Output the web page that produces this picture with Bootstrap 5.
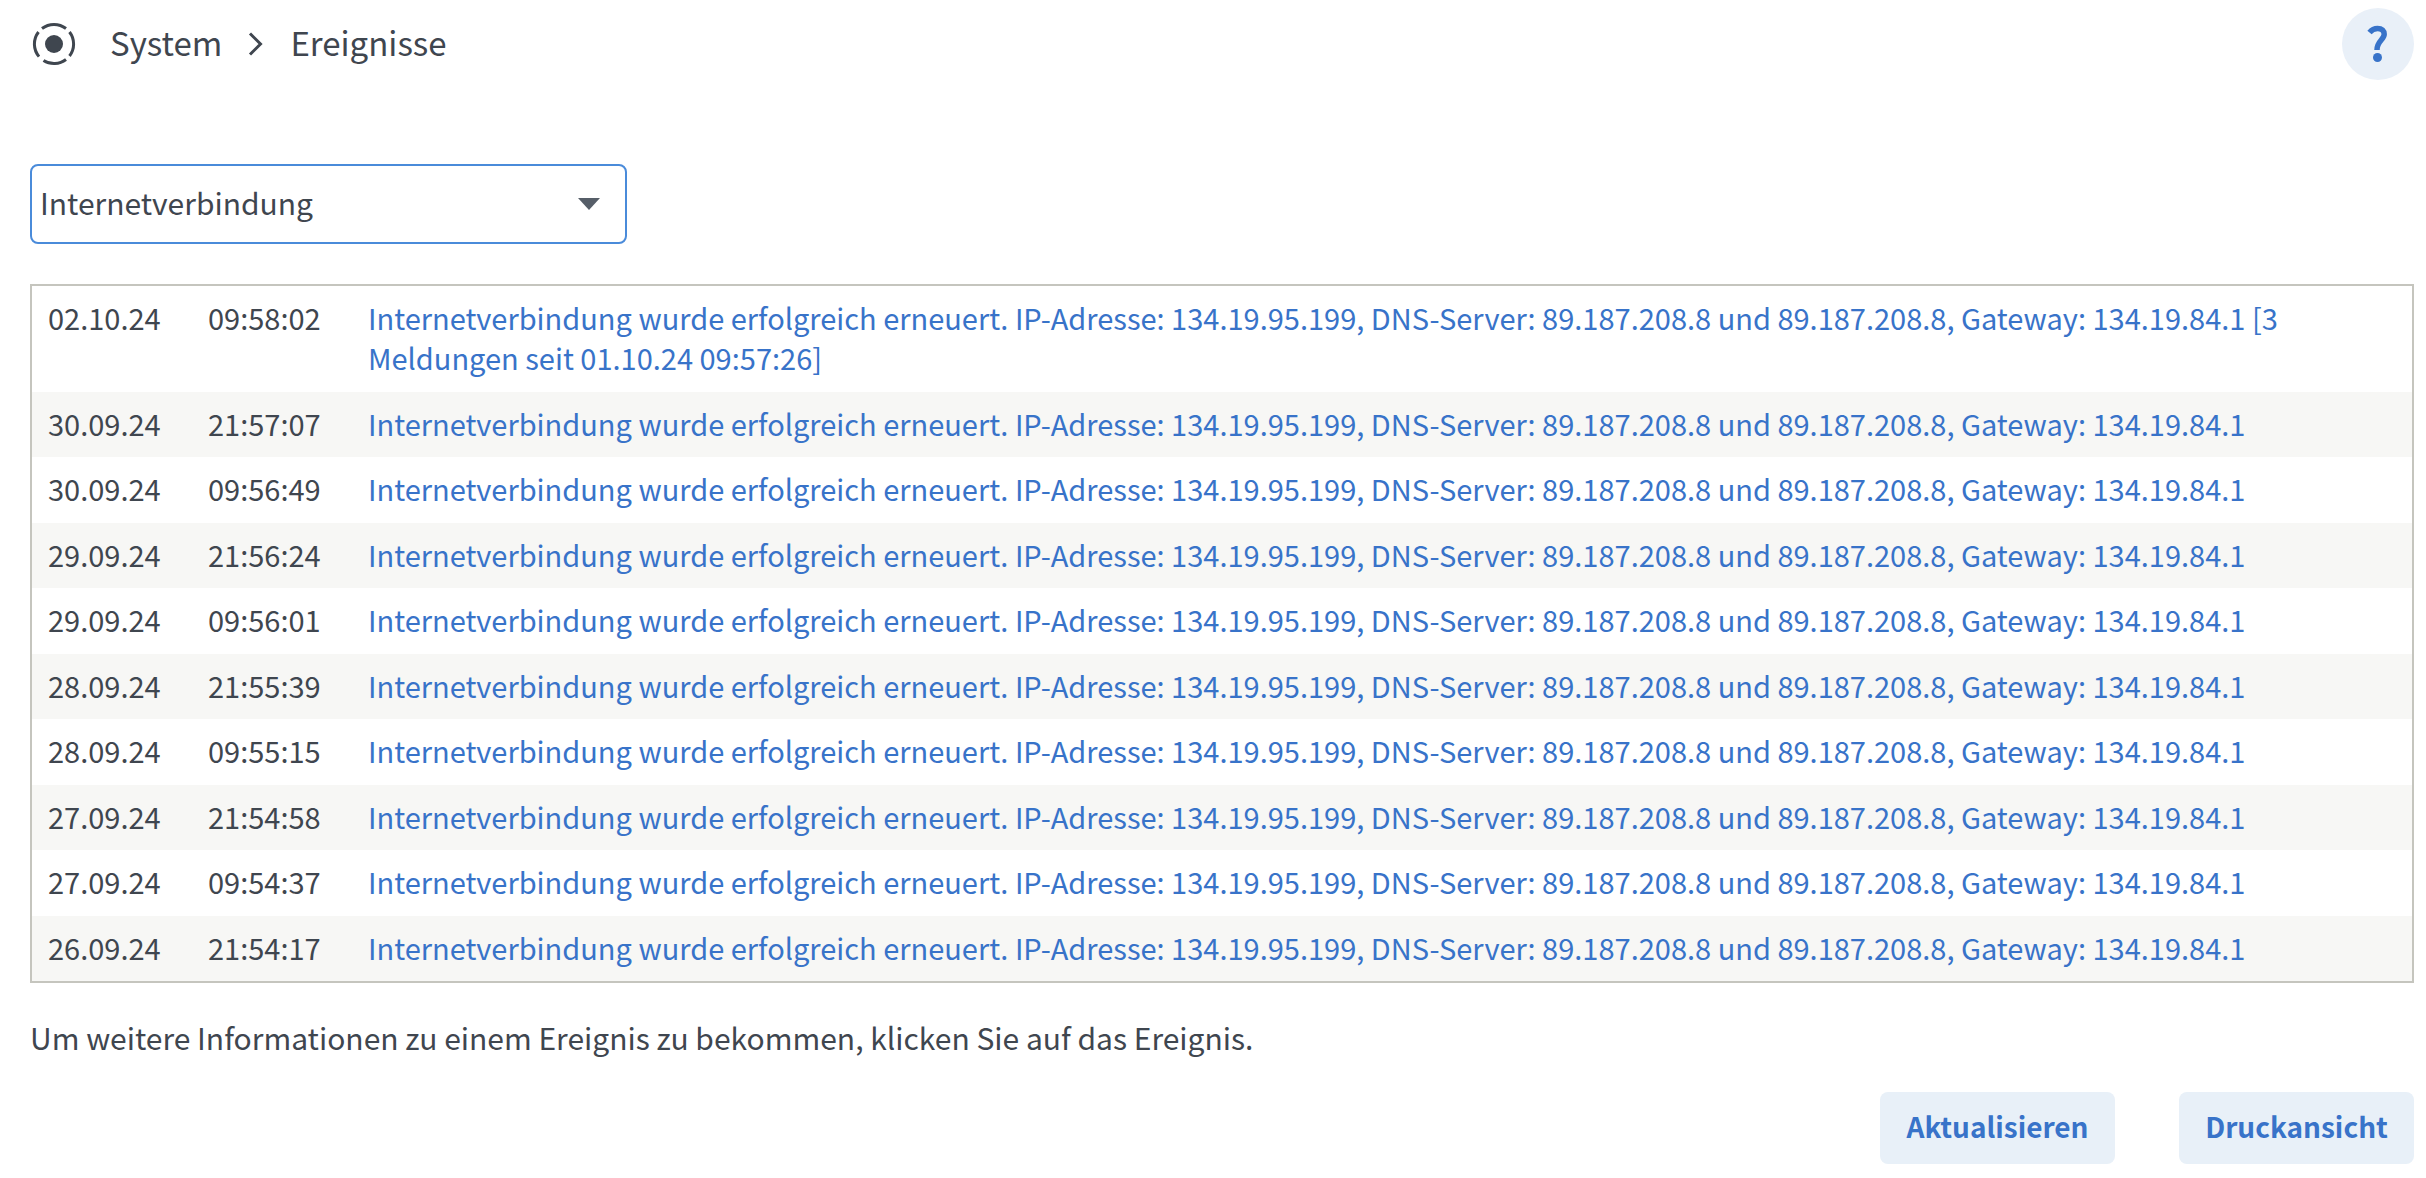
<!DOCTYPE html>
<html lang="de">
<head>
<meta charset="utf-8">
<meta name="viewport" content="width=device-width, initial-scale=1">
<title>System – Ereignisse</title>
<link rel="stylesheet" href="https://cdn.jsdelivr.net/npm/bootstrap@5.3.0/dist/css/bootstrap.min.css">
<style>
  body {
    font-family: "Noto Sans CJK SC", "Noto Sans", sans-serif;
    font-size: 30px;
    line-height: 40px;
    color: #3f464f;
    background: #fff;
  }
  a { color: #3873c9; }
  .page-shell { padding: 8px 12px 14px 30px; }
  .page-head { margin-bottom: 84px; }
  .crumbs { font-size: 33px; gap: 26px; }
  .crumbs li:first-child { margin-right: 6px; }
  .crumbs .crumb-text { padding-bottom: 4px; }
  .crumbs a { color: inherit; }
  .help-btn {
    width: 72px; height: 72px; padding: 0;
    background: #e9f0f8; color: #3873c9;
  }
  .event-filter {
    width: 597px; max-width: 100%; height: 80px;
    padding: 0 64px 4px 8px;
    font-size: 30px; line-height: 40px; color: #3f464f;
    border: 2px solid #4a8bda; border-radius: 8px;
    background-image: url("data:image/svg+xml,%3csvg xmlns='http://www.w3.org/2000/svg' viewBox='0 0 22 12'%3e%3cpath fill='%23565e68' d='M0 0h22L11 12z'/%3e%3c/svg%3e");
    background-size: 22px 12px;
    background-position: right 25px center;
    margin-bottom: 40px;
  }
  .event-box { border: 2px solid #c5c5be; margin-bottom: 34px; }
  .event-list { --bs-table-bg: transparent; font-size: 29px; color: inherit; margin: 0; }
  .event-list td { border: 0; padding: 11px 16px 15px; vertical-align: top; color: inherit; }
  .event-list tr:nth-child(even) td { background: #f7f7f5; padding-bottom: 14px; }
  .event-list .col-stamp { width: 160px; }
  .hint { margin-bottom: 35px; }
  .action-row { gap: 64px; }
  .action-btn {
    height: 72px; min-width: 235px; padding: 0 24px 4px;
    font-size: 28px; font-weight: 700; line-height: 40px;
    color: #3873c9; background: #e8f0f8; border: 0; border-radius: 8px;
  }
</style>
</head>
<body>
<main class="page-shell">
  <header class="page-head d-flex align-items-center justify-content-between">
    <nav aria-label="Pfad">
      <ol class="crumbs list-unstyled d-flex align-items-center mb-0">
        <li class="d-flex">
          <svg width="48" height="48" viewBox="-24 -24 48 48" fill="none" stroke="#3f464f" stroke-width="3" aria-hidden="true">
            <circle r="9" fill="#3f464f" stroke="none"/>
            <path d="M-12-15.500A19.600 19.600 0 0 1 12-15.500M15.500-12A19.600 19.600 0 0 1 15.500 12M12 15.500A19.600 19.600 0 0 1-10.500 16.500M-15 12.600A19.600 19.600 0 0 1-15.500-12"/>
          </svg>
        </li>
        <li class="crumb-text"><a href="#" class="text-decoration-none">System</a></li>
        <li class="d-flex">
          <svg width="16" height="24" viewBox="0 0 16 24" fill="none" stroke="#3f464f" stroke-width="3" aria-hidden="true"><path d="M2 1.500 12.500 12 2 22.500"/></svg>
        </li>
        <li class="crumb-text" aria-current="page">Ereignisse</li>
      </ol>
    </nav>
    <button type="button" class="help-btn btn rounded-circle border-0 d-flex align-items-center justify-content-center" aria-label="Hilfe">
      <svg width="24" height="40" viewBox="0 0 24 40" aria-hidden="true">
        <path d="M3.500 8.500C6 5.500 8.500 4.500 11.500 4.500c4.500 0 6.700 2.300 6.700 5.800 0 5.200-7.500 7-7.200 15.700" fill="none" stroke="#3873c9" stroke-width="5.500"/>
        <circle cx="11.500" cy="33.500" r="4.500" fill="#3873c9"/>
      </svg>
    </button>
  </header>

  <form>
    <select class="event-filter form-select shadow-none" aria-label="Ereignisse filtern">
      <option selected>Internetverbindung</option>
    </select>
  </form>

  <div class="event-box">
    <table class="event-list table">
      <colgroup><col class="col-stamp"><col class="col-stamp"><col></colgroup>
      <tbody>
        <tr><td>02.10.24</td><td>09:58:02</td><td><a href="#" class="text-decoration-none">Internetverbindung wurde erfolgreich erneuert. IP-Adresse: 134.19.95.199, DNS-Server: 89.187.208.8 und 89.187.208.8, Gateway: 134.19.84.1 [3 Meldungen seit 01.10.24 09:57:26]</a></td></tr>
        <tr><td>30.09.24</td><td>21:57:07</td><td><a href="#" class="text-decoration-none">Internetverbindung wurde erfolgreich erneuert. IP-Adresse: 134.19.95.199, DNS-Server: 89.187.208.8 und 89.187.208.8, Gateway: 134.19.84.1</a></td></tr>
        <tr><td>30.09.24</td><td>09:56:49</td><td><a href="#" class="text-decoration-none">Internetverbindung wurde erfolgreich erneuert. IP-Adresse: 134.19.95.199, DNS-Server: 89.187.208.8 und 89.187.208.8, Gateway: 134.19.84.1</a></td></tr>
        <tr><td>29.09.24</td><td>21:56:24</td><td><a href="#" class="text-decoration-none">Internetverbindung wurde erfolgreich erneuert. IP-Adresse: 134.19.95.199, DNS-Server: 89.187.208.8 und 89.187.208.8, Gateway: 134.19.84.1</a></td></tr>
        <tr><td>29.09.24</td><td>09:56:01</td><td><a href="#" class="text-decoration-none">Internetverbindung wurde erfolgreich erneuert. IP-Adresse: 134.19.95.199, DNS-Server: 89.187.208.8 und 89.187.208.8, Gateway: 134.19.84.1</a></td></tr>
        <tr><td>28.09.24</td><td>21:55:39</td><td><a href="#" class="text-decoration-none">Internetverbindung wurde erfolgreich erneuert. IP-Adresse: 134.19.95.199, DNS-Server: 89.187.208.8 und 89.187.208.8, Gateway: 134.19.84.1</a></td></tr>
        <tr><td>28.09.24</td><td>09:55:15</td><td><a href="#" class="text-decoration-none">Internetverbindung wurde erfolgreich erneuert. IP-Adresse: 134.19.95.199, DNS-Server: 89.187.208.8 und 89.187.208.8, Gateway: 134.19.84.1</a></td></tr>
        <tr><td>27.09.24</td><td>21:54:58</td><td><a href="#" class="text-decoration-none">Internetverbindung wurde erfolgreich erneuert. IP-Adresse: 134.19.95.199, DNS-Server: 89.187.208.8 und 89.187.208.8, Gateway: 134.19.84.1</a></td></tr>
        <tr><td>27.09.24</td><td>09:54:37</td><td><a href="#" class="text-decoration-none">Internetverbindung wurde erfolgreich erneuert. IP-Adresse: 134.19.95.199, DNS-Server: 89.187.208.8 und 89.187.208.8, Gateway: 134.19.84.1</a></td></tr>
        <tr><td>26.09.24</td><td>21:54:17</td><td><a href="#" class="text-decoration-none">Internetverbindung wurde erfolgreich erneuert. IP-Adresse: 134.19.95.199, DNS-Server: 89.187.208.8 und 89.187.208.8, Gateway: 134.19.84.1</a></td></tr>
      </tbody>
    </table>
  </div>

  <p class="hint">Um weitere Informationen zu einem Ereignis zu bekommen, klicken Sie auf das Ereignis.</p>

  <div class="action-row d-flex justify-content-end">
    <button type="button" class="action-btn btn">Aktualisieren</button>
    <button type="button" class="action-btn btn">Druckansicht</button>
  </div>
</main>
<script src="https://cdn.jsdelivr.net/npm/bootstrap@5.3.0/dist/js/bootstrap.bundle.min.js"></script>
</body>
</html>
